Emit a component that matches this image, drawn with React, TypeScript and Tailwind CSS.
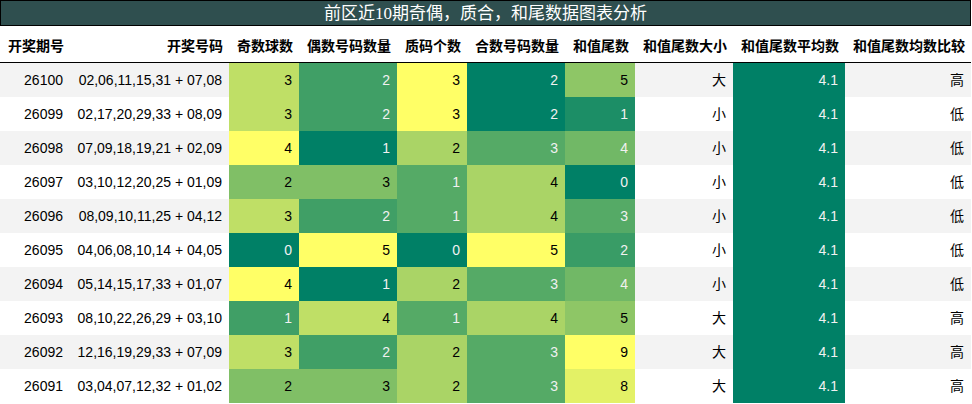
import React from 'react';

// summer colormap, per-column min/max like pandas background_gradient
const summer = (v: number) => {
  const r = Math.round(v * 255);
  const g = Math.round((0.5 + v / 2) * 255);
  const b = 102;
  return { r, g, b };
};

const lum = (c: number) => {
  const x = c / 255;
  return x <= 0.03928 ? x / 12.92 : Math.pow((x + 0.055) / 1.055, 2.4);
};

const cellStyle = (val: number, min: number, max: number) => {
  const v = max === min ? 0 : (val - min) / (max - min);
  const { r, g, b } = summer(v);
  const L = 0.2126 * lum(r) + 0.7152 * lum(g) + 0.0722 * lum(b);
  return {
    backgroundColor: `rgb(${r},${g},${b})`,
    color: L < 0.408 ? '#f1f1f1' : '#000000',
  };
};

interface Row {
  id: string;
  nums: string;
  odd: number;
  even: number;
  prime: number;
  comp: number;
  tail: number;
  size: string;
  avg: number;
  cmp: string;
}

const rows: Row[] = [
  { id: '26100', nums: '02,06,11,15,31 + 07,08', odd: 3, even: 2, prime: 3, comp: 2, tail: 5, size: '大', avg: 4.1, cmp: '高' },
  { id: '26099', nums: '02,17,20,29,33 + 08,09', odd: 3, even: 2, prime: 3, comp: 2, tail: 1, size: '小', avg: 4.1, cmp: '低' },
  { id: '26098', nums: '07,09,18,19,21 + 02,09', odd: 4, even: 1, prime: 2, comp: 3, tail: 4, size: '小', avg: 4.1, cmp: '低' },
  { id: '26097', nums: '03,10,12,20,25 + 01,09', odd: 2, even: 3, prime: 1, comp: 4, tail: 0, size: '小', avg: 4.1, cmp: '低' },
  { id: '26096', nums: '08,09,10,11,25 + 04,12', odd: 3, even: 2, prime: 1, comp: 4, tail: 3, size: '小', avg: 4.1, cmp: '低' },
  { id: '26095', nums: '04,06,08,10,14 + 04,05', odd: 0, even: 5, prime: 0, comp: 5, tail: 2, size: '小', avg: 4.1, cmp: '低' },
  { id: '26094', nums: '05,14,15,17,33 + 01,07', odd: 4, even: 1, prime: 2, comp: 3, tail: 4, size: '小', avg: 4.1, cmp: '低' },
  { id: '26093', nums: '08,10,22,26,29 + 03,10', odd: 1, even: 4, prime: 1, comp: 4, tail: 5, size: '大', avg: 4.1, cmp: '高' },
  { id: '26092', nums: '12,16,19,29,33 + 07,09', odd: 3, even: 2, prime: 2, comp: 3, tail: 9, size: '大', avg: 4.1, cmp: '高' },
  { id: '26091', nums: '03,04,07,12,32 + 01,02', odd: 2, even: 3, prime: 2, comp: 3, tail: 8, size: '大', avg: 4.1, cmp: '高' },
];

const headers = ['开奖期号', '开奖号码', '奇数球数', '偶数号码数量', '质码个数', '合数号码数量', '和值尾数', '和值尾数大小', '和值尾数平均数', '和值尾数均数比较'];

const numKeys = ['odd', 'even', 'prime', 'comp', 'tail'] as const;

const range = (k: keyof Row) => {
  const vals = rows.map((r) => r[k] as number);
  return [Math.min(...vals), Math.max(...vals)];
};

const cols = 'grid grid-cols-[70px_159px_70px_98px_70px_98px_70px_98px_112px_126px]';

function App() {
  const ranges = Object.fromEntries(numKeys.map((k) => [k, range(k)]));
  const avgRange = range('avg');

  return (
    <div className="w-[971px] bg-white text-black" style={{ fontFamily: '"Liberation Sans", "Noto Sans CJK SC", sans-serif' }}>
      <div
        className="h-[26px] bg-[#2f4f4f] border border-black flex items-center justify-center text-white text-[17px] leading-none"
        style={{ fontFamily: '"Liberation Serif", "Noto Sans CJK SC", serif' }}
      >
        前区近10期奇偶，质合，和尾数据图表分析
      </div>

      <div className={`${cols} h-[37px] border-b border-black font-bold text-[14px]`}>
        {headers.map((h, i) => (
          <div key={h} className={`flex items-center pt-[4px] ${i === 0 ? 'justify-start pl-[8px]' : 'justify-end pr-[6px]'}`}>
            {h}
          </div>
        ))}
      </div>

      {rows.map((r, idx) => {
        const stripe = idx % 2 === 0 ? 'bg-[#f3f3f3]' : 'bg-white';
        return (
          <div key={r.id} className={`${cols} h-[34px] text-[14px]`}>
            <div className={`${stripe} flex items-center justify-end pr-[7px]`}>{r.id}</div>
            <div className={`${stripe} flex items-center justify-end pr-[7px]`}>{r.nums}</div>
            {numKeys.map((k) => (
              <div key={k} className="flex items-center justify-end pr-[7px]" style={cellStyle(r[k], ranges[k][0], ranges[k][1])}>
                {r[k]}
              </div>
            ))}
            <div className={`${stripe} flex items-center justify-end pr-[7px]`}>{r.size}</div>
            <div className="flex items-center justify-end pr-[7px]" style={cellStyle(r.avg, avgRange[0], avgRange[1])}>
              {r.avg.toFixed(1)}
            </div>
            <div className={`${stripe} flex items-center justify-end pr-[7px]`}>{r.cmp}</div>
          </div>
        );
      })}
    </div>
  );
}

export default App;
